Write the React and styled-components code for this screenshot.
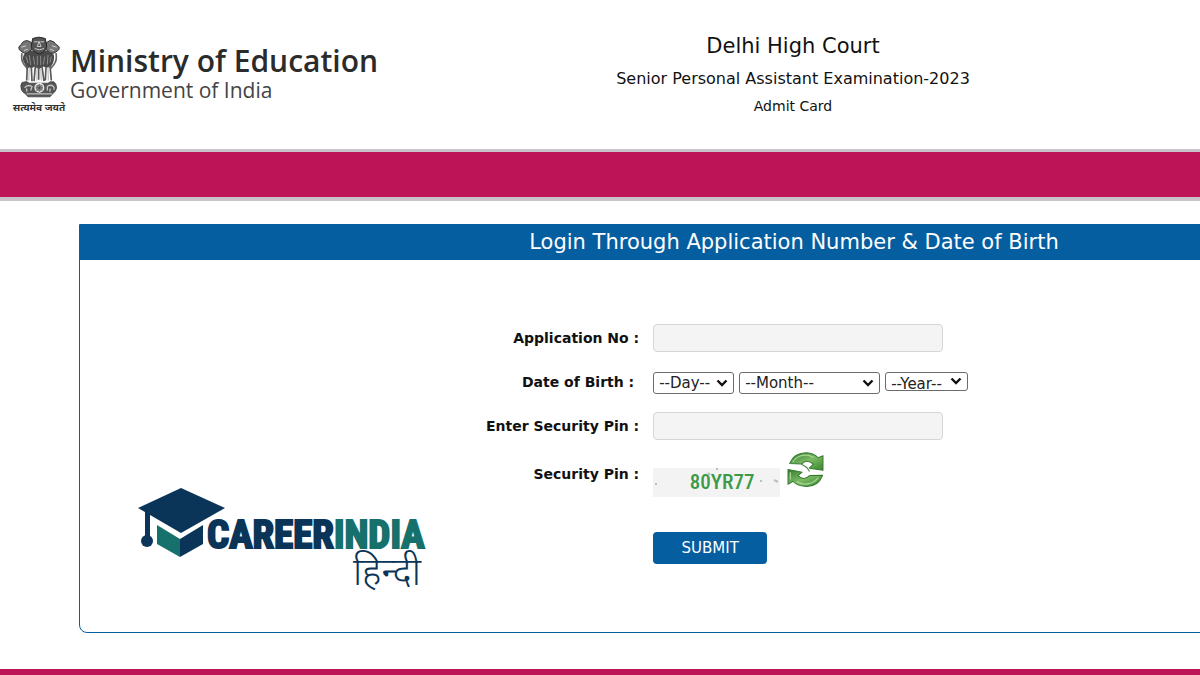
import React, { useState } from "react";
import styled, { createGlobalStyle } from "styled-components";

const GlobalStyle = createGlobalStyle`
  * {
    box-sizing: border-box;
  }
  body {
    margin: 0;
    background: #fff;
    color: #111;
    font-family: "DejaVu Sans", Verdana, sans-serif;
  }
`;

const Page = styled.div`
  min-height: 100vh;
  overflow: hidden;
  display: flex;
  flex-direction: column;
`;

/* the sheet is wider than the window, its right side runs off the edge */
const Sheet = styled.div`
  width: 132%;
  flex: 1;
  display: flex;
  flex-direction: column;
`;

const Header = styled.header`
  display: grid;
  grid-template-columns: 1fr auto 1fr;
  height: 149px;
`;

const Brand = styled.div`
  display: flex;
  align-items: flex-start;
  gap: 4px;
  padding: 36px 0 0 12px;
`;

const Emblem = styled.div`
  width: 54px;
  display: flex;
  flex-direction: column;
  align-items: center;
  font: bold 10px/16px "Noto Sans", "Noto Sans Devanagari", sans-serif;
  white-space: nowrap;
  color: #333;
`;

const BrandText = styled.div`
  padding-top: 8px;
  font-family: "Open Sans", "Noto Sans", sans-serif;
`;

const BrandName = styled.div`
  font-size: 30px;
  line-height: 34px;
  font-weight: 600;
  color: #2b2b2b;
`;

const BrandSub = styled.div`
  font-size: 21px;
  line-height: 24px;
  color: #444;
`;

const ExamInfo = styled.div`
  padding: 32px 0 0 2px;
  text-align: center;
`;

const Court = styled.h1`
  margin: 0;
  font-size: 21px;
  line-height: 28px;
  font-weight: normal;
`;

const Exam = styled.p`
  margin: 5px 0 0;
  font-size: 16px;
  line-height: 28px;
`;

const Doc = styled.p`
  margin: 0;
  font-size: 14px;
  line-height: 26px;
`;

const Band = styled.div`
  height: 52px;
  background: #bc1457;
  border: solid #c9c3c9;
  border-width: 3px 0 4px;
`;

const Panel = styled.main`
  position: relative;
  margin: 23px 5% 36px;
  border: 1px solid #055e9f;
  border-radius: 0 0 8px 8px;
`;

const PanelTitle = styled.h2`
  margin: 0;
  padding-left: 4px;
  background: #055e9f;
  color: #fff;
  font-size: 21px;
  line-height: 35px;
  font-weight: normal;
  text-align: center;
`;

const Form = styled.form`
  padding: 56px 0 68px;
`;

const Row = styled.div`
  display: grid;
  grid-template-columns: 23fr 35fr;
  column-gap: 14px;
  align-items: center;
  min-height: ${(props) => (props.$tall ? "52px" : "44px")};
`;

const Label = styled.label`
  font-size: 14px;
  font-weight: bold;
  text-align: right;
  padding-right: ${(props) => (props.$inset ? "5px" : "0")};
`;

const TextBox = styled.input`
  width: 290px;
  height: 28px;
  padding: 0 8px;
  border: 1px solid #d6d6d6;
  border-radius: 4px;
  background: #f4f4f4;
  font: inherit;
`;

const Selects = styled.div`
  display: flex;
  align-items: flex-start;
  gap: 5px;
  padding-top: 1px;
`;

const Select = styled.select`
  appearance: none;
  width: ${(props) => props.$width};
  height: ${(props) => (props.$short ? "19px" : "22px")};
  padding: ${(props) => (props.$short ? "2px 0 0 5px" : "0 0 0 5px")};
  border: 1px solid #6b6b6b;
  border-radius: 3px;
  background: #fff
    url("data:image/svg+xml,%3Csvg xmlns='http://www.w3.org/2000/svg' width='12' height='8'%3E%3Cpath d='M1.5 1.5l4.5 4.5 4.5-4.5' fill='none' stroke='%23111' stroke-width='2.4'/%3E%3C/svg%3E")
    no-repeat right 5px center;
  color: #222;
  font: 15px "DejaVu Sans", Verdana, sans-serif;
`;

const PinLine = styled.div`
  display: flex;
  align-items: flex-start;
  gap: 7px;
`;

const Captcha = styled.output`
  position: relative;
  width: 127px;
  height: 29px;
  margin-top: 17px;
  padding-left: 11px;
  background: #f3f3f3;
  color: #3c9a48;
  font: 500 21px/29px "Roboto Condensed", Roboto, sans-serif;
  text-align: center;
`;

const Specks = styled.svg`
  position: absolute;
  inset: 0;
`;

const IconButton = styled.button`
  padding: 0;
  border: 0;
  background: none;
  cursor: pointer;
  svg {
    display: block;
  }
`;

const Actions = styled(Row)`
  margin-top: 32px;
  min-height: 0;
`;

const Submit = styled.button`
  grid-column: 2;
  justify-self: start;
  width: 114px;
  height: 32px;
  border: 0;
  border-radius: 4px;
  background: #055e9f;
  color: #fff;
  font: 15px "DejaVu Sans", Verdana, sans-serif;
  cursor: pointer;
`;

const Watermark = styled.svg`
  position: absolute;
  left: 58px;
  bottom: 37px;
`;

const Footer = styled.footer`
  flex: 1;
  min-height: 6px;
  background: #bc1457;
`;

const LionEmblem = () => (
  <svg width="42" height="63" viewBox="54 34 126 186" aria-hidden="true">
    <path
      d="M76 84Q66 90 70 108L80 126Q92 132 104 124L116 132L130 124Q144 132 154 122Q164 108 162 90L150 76H88Z"
      fill="#4a4a4a"
    />
    <path
      d="M58 74Q52 64 64 58Q66 48 82 46L94 52L96 72L82 84Q72 86 66 80ZM176 74Q182 64 168 58Q164 48 150 46L140 52L138 72L150 84Q164 86 168 80Z"
      fill="#777"
      stroke="#333"
      strokeWidth="3"
    />
    <path
      d="M98 40Q116 32 136 40L140 64Q136 82 118 86Q98 82 94 64Z"
      fill="#555"
      stroke="#292929"
      strokeWidth="3"
    />
    <path
      d="M102 50H113M121 50H132M117 48L112 64H123ZM104 70Q118 78 132 70M64 66L78 62M170 66L156 62M72 76L84 72M162 76L150 72"
      stroke="#ccc"
      strokeWidth="3"
      fill="none"
    />
    <path
      d="M66 84Q62 104 72 118L82 130M168 84Q172 104 162 118L152 130"
      stroke="#666"
      strokeWidth="5"
      fill="none"
    />
    <path
      d="M78 94L84 114M88 90L92 120M100 94L104 118M112 92V120M122 92V120M134 94L130 118M144 90L142 118M154 94L150 112"
      stroke="#8c8c8c"
      strokeWidth="3"
    />
    <path
      d="M82 122L80 166M94 126L96 168M106 124L102 168M116 126V164M126 124L132 168M138 126L136 166M150 120L154 166"
      stroke="#595959"
      strokeWidth="5"
    />
    <path
      d="M88 126L86 166M111 130V166M122 130L124 166M144 126L145 166"
      stroke="#c4c4c4"
      strokeWidth="4"
    />
    <path
      d="M66 172Q60 178 64 194Q68 202 76 206L84 215H150L158 206Q168 200 170 188Q170 176 162 170H150L144 174H88L80 169Z"
      fill="#555"
      stroke="#333"
      strokeWidth="2"
    />
    <circle cx="118" cy="188" r="13" fill="#999" stroke="#ededed" strokeWidth="4" />
    <path
      d="M118 177V199M107 188H129M110 180L126 196M126 180L110 196"
      stroke="#444"
      strokeWidth="2"
    />
    <path
      d="M74 188Q82 176 96 184L92 196M80 190V200M142 196V184Q154 176 162 186V194M150 190V200M80 206H156"
      stroke="#c4c4c4"
      strokeWidth="4"
      fill="none"
    />
  </svg>
);

const RefreshIcon = () => (
  <svg width="37" height="37" viewBox="441 31 110 110" aria-hidden="true">
    <defs>
      <linearGradient id="leaf" x1="0" y1="0" x2="1" y2="1">
        <stop offset="0" stopColor="#2f7a2b" />
        <stop offset="0.5" stopColor="#7dba66" />
        <stop offset="1" stopColor="#36872c" />
      </linearGradient>
    </defs>
    <g fill="url(#leaf)" stroke="#397b32" strokeWidth="3" strokeLinejoin="round">
      <path d="M449 68C457 46 476 36 499 36C514 37 526 42 534 51L548 45V88L507 82L519 71C508 59 494 58 484 70Z" />
      <path d="M547 103C538 126 519 138 494 136C479 135 467 130 459 121L444 130V86L486 94L474 104C484 116 498 115 508 104Z" />
      <path d="M485 72L499 70L502 82L516 87L508 98L492 92Z" fill="#fff" stroke="none" />
      <path d="M484 70L500 80L508 92" fill="none" />
    </g>
    <path
      d="M458 64C467 48 486 41 506 44L520 50M451 94V116M470 122C491 135 519 130 534 110"
      fill="none"
      stroke="#a6d492"
      strokeWidth="4"
    />
  </svg>
);

const CareerLogo = () => (
  <Watermark width="292" height="108" viewBox="0 0 292 108" role="img" aria-label="CareerIndia हिन्दी">
    <path d="M0 21L43 1L87 21L43 46Z" fill="#0a3558" />
    <path d="M7 23L12 26V50H7Z" fill="#0a3558" />
    <circle cx="9" cy="54" r="6" fill="#0a3558" />
    <path d="M19 38L42 52V70L19 57Z" fill="#16706b" />
    <path d="M42 52L65 38V57L42 70Z" fill="#0a3558" />
    <text
      x="69"
      y="61"
      fill="#0a3558"
      stroke="#0a3558"
      strokeWidth="2"
      fontFamily="'Roboto Condensed', Roboto, sans-serif"
      fontSize="39"
      fontWeight="bold"
    >
      CAREER
      <tspan fill="#16706b" stroke="#16706b">
        INDIA
      </tspan>
    </text>
    <text
      x="283"
      y="98"
      textAnchor="end"
      fill="#0a3558"
      fontFamily="'Noto Sans', 'Noto Sans Devanagari', sans-serif"
      fontSize="38"
      fontWeight="300"
    >
      हिन्दी
    </text>
  </Watermark>
);

const months = [
  "January", "February", "March", "April", "May", "June",
  "July", "August", "September", "October", "November", "December",
];
const days = Array.from({ length: 31 }, (_, i) => i + 1);
const years = Array.from({ length: 50 }, (_, i) => 2005 - i);

const App = () => {
  const [form, setForm] = useState({ appNo: "", day: "", month: "", year: "", pin: "" });

  const handleChange = (e) => {
    setForm({ ...form, [e.target.name]: e.target.value });
  };

  const options = (list) =>
    list.map((item) => (
      <option key={item} value={item}>
        {item}
      </option>
    ));

  return (
    <Page>
      <GlobalStyle />
      <Sheet>
        <Header>
          <Brand>
            <Emblem>
              <LionEmblem />
              सत्यमेव जयते
            </Emblem>
            <BrandText>
              <BrandName>Ministry of Education</BrandName>
              <BrandSub>Government of India</BrandSub>
            </BrandText>
          </Brand>
          <ExamInfo>
            <Court>Delhi High Court</Court>
            <Exam>Senior Personal Assistant Examination-2023</Exam>
            <Doc>Admit Card</Doc>
          </ExamInfo>
        </Header>
        <Band />
        <Panel>
          <PanelTitle>Login Through Application Number &amp; Date of Birth</PanelTitle>
          <Form onSubmit={(e) => e.preventDefault()}>
            <Row>
              <Label htmlFor="appNo">Application No :</Label>
              <TextBox id="appNo" name="appNo" value={form.appNo} onChange={handleChange} />
            </Row>
            <Row>
              <Label htmlFor="day" $inset>
                Date of Birth :
              </Label>
              <Selects>
                <Select id="day" name="day" $width="81px" value={form.day} onChange={handleChange}>
                  <option value="">--Day--</option>
                  {options(days)}
                </Select>
                <Select
                  name="month"
                  aria-label="Month of birth"
                  $width="141px"
                  value={form.month}
                  onChange={handleChange}
                >
                  <option value="">--Month--</option>
                  {options(months)}
                </Select>
                <Select
                  name="year"
                  aria-label="Year of birth"
                  $width="83px"
                  $short
                  value={form.year}
                  onChange={handleChange}
                >
                  <option value="">--Year--</option>
                  {options(years)}
                </Select>
              </Selects>
            </Row>
            <Row>
              <Label htmlFor="pin">Enter Security Pin :</Label>
              <TextBox id="pin" name="pin" value={form.pin} onChange={handleChange} />
            </Row>
            <Row $tall>
              <Label htmlFor="captcha">Security Pin :</Label>
              <PinLine>
                <Captcha id="captcha">
                  80YR77
                  <Specks width="127" height="29" aria-hidden="true">
                    <path
                      d="M2 16h2M55 5l2 2M63 1h2M107 13h2M121 12l4 2"
                      stroke="#b5c4b5"
                      strokeWidth="2"
                    />
                  </Specks>
                </Captcha>
                <IconButton type="button" aria-label="Refresh security pin">
                  <RefreshIcon />
                </IconButton>
              </PinLine>
            </Row>
            <Actions>
              <Submit type="submit">SUBMIT</Submit>
            </Actions>
          </Form>
          <CareerLogo />
        </Panel>
        <Footer />
      </Sheet>
    </Page>
  );
};

export default App;
